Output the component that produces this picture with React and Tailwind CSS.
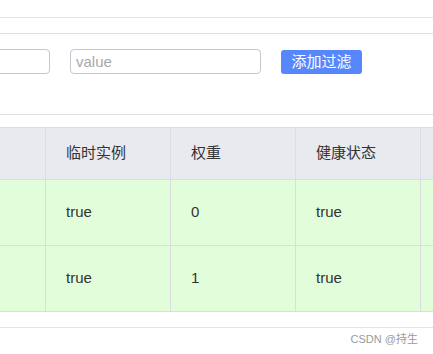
import React from 'react';

const columns = ['', '临时实例', '权重', '健康状态', ''];
const rows = [
  ['', 'true', '0', 'true', ''],
  ['', 'true', '1', 'true', ''],
];

const App = () => {
  return (
    <div
      className="w-[433px] h-[354px] overflow-hidden bg-white text-[#333] text-[15px]"
      style={{ fontFamily: '"Liberation Sans", "Noto Sans CJK SC", sans-serif' }}
    >
      {/* top rules */}
      <div className="h-[17px]" />
      <div className="h-px bg-[#e3e4e8]" />
      <div className="h-[15px]" />
      <div className="h-px bg-[#dfe0e5]" />

      {/* filter bar */}
      <div className="h-[80px] pt-[15px]">
        <div className="ml-[-150px] flex items-center gap-[20px]">
          <input className="w-[200px] h-[25px] border border-[#c4c6cf] rounded-[4px] px-[5px] outline-none" />
          <input
            placeholder="value"
            className="w-[191px] h-[25px] border border-[#c4c6cf] rounded-[4px] px-[5px] text-[15px] placeholder:text-[#a8a8ad] outline-none"
          />
          <button className="w-[81px] h-[24px] rounded-[3px] bg-[#5687fd] text-white text-[15px] leading-none">
            添加过滤
          </button>
        </div>
      </div>
      <div className="h-px bg-[#dfe0e5]" />
      <div className="h-[12px]" />

      {/* table */}
      <div className="ml-[-154px] w-[700px] border-t border-b border-[#dcdde2]">
        <div className="flex h-[52px] bg-[#e9eaef] border-b border-[#dcdde2]">
          {columns.map((c, i) => (
            <div
              key={i}
              className={`flex items-center pl-[20px] border-r border-[#dcdde2] ${i === 0 ? 'w-[200px]' : 'w-[125px]'}`}
            >
              {c}
            </div>
          ))}
        </div>
        {rows.map((r, ri) => (
          <div
            key={ri}
            className={`flex bg-[#e2fdd9] ${ri === 0 ? 'h-[66px] border-b border-[#dcdde2]' : 'h-[65px]'}`}
          >
            {r.map((c, i) => (
              <div
                key={i}
                className={`flex items-center pl-[20px] border-r border-[#dcdde2] ${i === 0 ? 'w-[200px]' : 'w-[125px]'}`}
              >
                {c}
              </div>
            ))}
          </div>
        ))}
      </div>

      <div className="h-[15px]" />
      <div className="h-px bg-[#e3e4e8]" />
      <div className="flex justify-end pr-[15px] pt-[3px] text-[11px] text-[#9a9a9a]">
        CSDN @持生
      </div>
    </div>
  );
};

export default App;
